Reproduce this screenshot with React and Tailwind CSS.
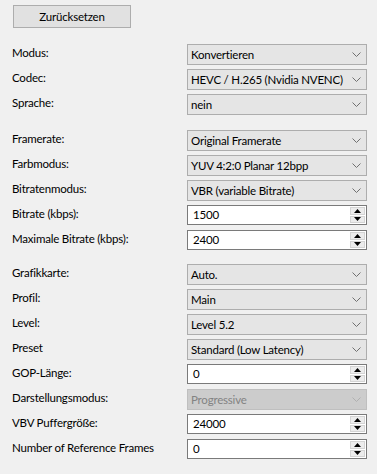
import React from "react";

const font = { fontFamily: 'Lato, "Noto Sans", sans-serif' };

const Chevron = ({ color = "#707070" }) => (
  <svg width="9" height="5" viewBox="0 0 9 5" className="mr-[5px] ml-auto shrink-0">
    <polyline points="0.5,0.5 4.5,4.5 8.5,0.5" fill="none" stroke={color} strokeWidth="1" />
  </svg>
);

const Combo = ({ value, disabled }) => (
  <div
    className={
      "flex h-[21px] w-[180px] items-center border pl-[3px] " +
      (disabled
        ? "border-[#bfbfbf] bg-[#cccccc] text-[#838383]"
        : "border-[#adadad] bg-[#e5e5e5] text-black")
    }
  >
    <span className="whitespace-nowrap">{value}</span>
    <Chevron color={disabled ? "#b0b0b0" : "#707070"} />
  </div>
);

const Numeric = ({ value }) => (
  <div className="flex h-[20px] w-[180px] items-center border border-[#7a7a7a] bg-white pl-[5px]">
    <span>{value}</span>
    <div className="ml-auto mr-[1px] flex h-full w-[15px] flex-col gap-[1px] py-[1px]">
      <div className="flex flex-1 items-center justify-center border border-[#d4d4d4] bg-[#ececec]">
        <svg width="7" height="4" viewBox="0 0 7 4">
          <polygon points="0,4 3.5,0 7,4" fill="#000" />
        </svg>
      </div>
      <div className="flex flex-1 items-center justify-center border border-[#d4d4d4] bg-[#ececec]">
        <svg width="7" height="4" viewBox="0 0 7 4">
          <polygon points="0,0 7,0 3.5,4" fill="#000" />
        </svg>
      </div>
    </div>
  </div>
);

const Row = ({ label, children }) => (
  <div className="flex h-[25px]">
    <div className="w-[187px] shrink-0 whitespace-nowrap pl-[12px]">{label}</div>
    <div className="shrink-0">{children}</div>
  </div>
);

export default function App() {
  return (
    <div
      className="h-[474px] w-[377px] bg-[#f0f0f0] pt-[5px] text-[11.5px] tracking-[-0.2px] text-black"
      style={font}
    >
      <button className="ml-[13px] flex h-[23px] w-[118px] items-center justify-center border border-[#adadad] bg-[#e1e1e1]">
        Zurücksetzen
      </button>

      <div className="mt-[16px] flex flex-col">
        <Row label="Modus:"><Combo value="Konvertieren" /></Row>
        <Row label="Codec:"><Combo value="HEVC / H.265 (Nvidia NVENC)" /></Row>
        <Row label="Sprache:"><Combo value="nein" /></Row>
      </div>

      <div className="mt-[11px] flex flex-col">
        <Row label="Framerate:"><Combo value="Original Framerate" /></Row>
        <Row label="Farbmodus:"><Combo value="YUV 4:2:0 Planar 12bpp" /></Row>
        <Row label="Bitratenmodus:"><Combo value="VBR (variable Bitrate)" /></Row>
        <Row label="Bitrate (kbps):"><Numeric value="1500" /></Row>
        <Row label="Maximale Bitrate (kbps):"><Numeric value="2400" /></Row>
      </div>

      <div className="mt-[9px] flex flex-col">
        <Row label="Grafikkarte:"><Combo value="Auto." /></Row>
        <Row label="Profil:"><Combo value="Main" /></Row>
        <Row label="Level:"><Combo value="Level 5.2" /></Row>
        <Row label="Preset"><Combo value="Standard (Low Latency)" /></Row>
        <Row label="GOP-Länge:"><Numeric value="0" /></Row>
        <Row label="Darstellungsmodus:"><Combo value="Progressive" disabled /></Row>
        <Row label="VBV Puffergröße:"><Numeric value="24000" /></Row>
        <Row label="Number of Reference Frames"><Numeric value="0" /></Row>
      </div>
    </div>
  );
}
